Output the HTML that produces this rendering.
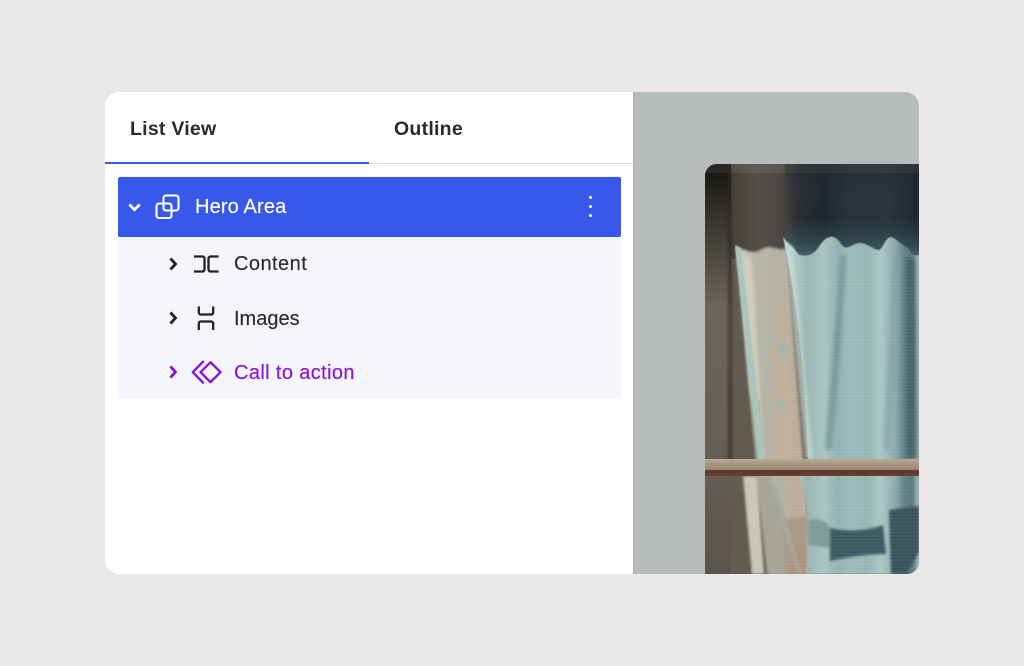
<!DOCTYPE html>
<html><head><meta charset="utf-8"><style>
html,body{margin:0;padding:0;width:1024px;height:666px;overflow:hidden;background:#eae9e7;font-family:"Liberation Sans",sans-serif}
.a{position:absolute}
.t{position:absolute;white-space:nowrap;line-height:24px;font-size:20px;color:#2b2b2b;-webkit-text-stroke:.15px currentColor}
</style></head><body>
<div class="a" style="left:105px;top:92px;width:814px;height:482px;border-radius:14px;background:#fff;overflow:hidden">
<div class="a" style="left:528px;top:0;width:286px;height:482px;background:#b6bcbc"></div>
<div class="a" style="left:528px;top:0;width:1px;height:482px;background:#a9aeae"></div>
<div class="a" style="left:0;top:70.5px;width:528px;height:1.5px;background:#dedede"></div>
<div class="a" style="left:0;top:70px;width:264px;height:2px;background:#3858e9"></div>
<div class="a" style="left:12.5px;top:84px;width:503.5px;height:223px;border-radius:3px;background:#f5f6fc"></div>
<div class="a" style="left:12.5px;top:84.5px;width:503.5px;height:60.5px;border-radius:2px;background:#3858e9"></div>
</div>
<div class="t" style="left:130px;top:117px;font-size:19.5px;font-weight:700;letter-spacing:.25px;-webkit-text-stroke:0">List View</div>
<div class="t" style="left:394px;top:117px;font-size:19.5px;font-weight:700;letter-spacing:.25px;-webkit-text-stroke:0">Outline</div>
<div class="t" style="left:195px;top:195px;color:#fff;letter-spacing:.15px">Hero Area</div>
<div class="t" style="left:234px;top:252px;letter-spacing:.45px">Content</div>
<div class="t" style="left:234px;top:307px;letter-spacing:0">Images</div>
<div class="t" style="left:234px;top:361px;color:#8a0fdc;letter-spacing:.38px">Call to action</div>
<svg class="a" style="left:0;top:0" width="1024" height="666" viewBox="0 0 1024 666" fill="none">
<defs>
<clipPath id="c"><path d="M705 574V176a12 12 0 0 1 12-12H919V562a12 12 0 0 1-12 12Z"/></clipPath>
<filter id="b4" x="-30%" y="-30%" width="160%" height="160%"><feGaussianBlur stdDeviation="4"/></filter>
<filter id="b2" x="-30%" y="-20%" width="160%" height="140%"><feGaussianBlur stdDeviation="2.200"/></filter>
<filter id="b1" x="-20%" y="-20%" width="140%" height="140%"><feGaussianBlur stdDeviation="1.200"/></filter>
<filter id="b05" x="-20%" y="-20%" width="140%" height="140%"><feGaussianBlur stdDeviation=".6"/></filter>
<linearGradient id="l" x1="0" y1="0" x2="0" y2="1"><stop offset="0" stop-color="#15130f"/><stop offset=".12" stop-color="#35302a"/><stop offset=".35" stop-color="#6d6559"/><stop offset=".7" stop-color="#675f54"/><stop offset="1" stop-color="#5a544b"/></linearGradient>
<linearGradient id="top" x1="0" y1="0" x2="1" y2="0"><stop offset="0" stop-color="#2a2722"/><stop offset=".12" stop-color="#474139"/><stop offset=".25" stop-color="#544f49"/><stop offset=".36" stop-color="#4a4641"/><stop offset=".43" stop-color="#2d3035"/><stop offset=".55" stop-color="#1f262c"/><stop offset=".68" stop-color="#2a3339"/><stop offset=".85" stop-color="#2b353c"/><stop offset="1" stop-color="#20262b"/></linearGradient>
<linearGradient id="topv" x1="0" y1="0" x2="0" y2="1"><stop offset="0" stop-color="#1d2226" stop-opacity=".3"/><stop offset=".55" stop-color="#2f4a55" stop-opacity="0"/><stop offset="1" stop-color="#486b78" stop-opacity=".85"/></linearGradient>
<linearGradient id="blue" x1="0" y1="0" x2="1" y2="0"><stop offset="0" stop-color="#bdd5cf"/><stop offset=".1" stop-color="#aac6c1"/><stop offset=".18" stop-color="#99b6b3"/><stop offset=".3" stop-color="#a9c6c2"/><stop offset=".4" stop-color="#94b3b1"/><stop offset=".5" stop-color="#9dbcb9"/><stop offset=".62" stop-color="#97b6b4"/><stop offset=".72" stop-color="#aac7c3"/><stop offset=".82" stop-color="#8fadad"/><stop offset=".9" stop-color="#5f7d84"/><stop offset=".95" stop-color="#5a7880"/><stop offset="1" stop-color="#a5c3be"/></linearGradient>
<linearGradient id="sheer" x1="0" y1="0" x2="1" y2="0"><stop offset="0" stop-color="#cfcfc0"/><stop offset=".3" stop-color="#b6b6a8"/><stop offset=".55" stop-color="#b5b2a3"/><stop offset=".8" stop-color="#bcac97"/><stop offset="1" stop-color="#c6b7a2"/></linearGradient>
<linearGradient id="rail" x1="0" y1="0" x2="0" y2="1"><stop offset="0" stop-color="#b5ad98"/><stop offset=".3" stop-color="#a8967f"/><stop offset=".62" stop-color="#9c8872"/><stop offset=".68" stop-color="#5f3428"/><stop offset="1" stop-color="#6b4033"/></linearGradient>
<pattern id="st" width="4" height="3.500" patternUnits="userSpaceOnUse"><rect width="4" height="1" fill="#fff" opacity=".05"/></pattern>
</defs>
<g clip-path="url(#c)">
<rect x="705" y="164" width="214" height="410" fill="#625b50"/>
<rect x="705" y="164" width="214" height="95" fill="url(#top)"/>
<rect x="705" y="164" width="26" height="410" fill="url(#l)"/>
<rect x="705" y="164" width="214" height="9" fill="#fff" opacity=".08"/>
<rect x="785" y="164" width="134" height="95" fill="url(#topv)"/>
<g filter="url(#b1)">
<path d="M728 170h4l0 290h-4Z" fill="#2f2a24" opacity=".6"/>
<path d="M736 248c6 0 12 4 18 4 6 0 10-6 16-5 6 1 10 3 16 2L812 574H770L758 476 748 380Z" fill="url(#sheer)"/>
<path d="M742 255c1 70 8 140 14 204h8c-4-70-8-140-13-200Z" fill="#d5d3c2" opacity=".7"/>
</g>
<g filter="url(#b2)">
<path d="M778 300c8 20 13 50 14 160h-18c-1-60-1-110 4-160Z" fill="#c6b098" opacity=".75"/>
<path d="M782 335l6 12-5 14-5-12Z" fill="#a3b5ae"/>
<path d="M780 395l6 10-4 12-5-10Z" fill="#a3b5ae"/>
</g>
<g filter="url(#b1)">
<path d="M752 400l6 60 4 0-4-60Z" fill="#38312a" opacity=".6"/>
<path d="M743 476h14l7 98h-12Z" fill="#c9c8b8"/>
<path d="M757 476h12l38 98h-40Z" fill="#a8a497"/>
<path d="M783 520l24-4v58h-22Z" fill="#a99a88"/>
<path d="M790 545l14 0 3 29h-14Z" fill="#b48a6b" opacity=".5"/>
</g>
<path d="M735 245l6 3 24 212h-7Z" fill="#a9c5bd" filter="url(#b05)"/>
<path d="M767 476h6l30 98h-6Z" fill="#9fb0ab" opacity=".5" filter="url(#b05)"/>
<path d="M783 237c5 6 7 8 10 10 3 3 5 8 7 8 4 1 9 1 13-2 6-3 8-14 17-16 7-2 11 8 14 10 5 2 10-4 16-4 7 0 11 5 18 7 5 0 7-12 12-13 5 0 10 7 17 10 3 3 5 8 8 8h4V574H806C811 540 806 490 800 476L808 459C805 380 797 300 783 237Z" fill="url(#blue)" filter="url(#b05)"/>
<g filter="url(#b2)">
<path d="M785 245l6 0 22 214h-7Z" fill="#cee2dc" opacity=".7"/>
<path d="M840 255l6 0c-4 70-8 130-14 195h-7c5-70 12-130 15-195Z" fill="#5f7f82" opacity=".55"/>
<path d="M892 255l6 0c-2 70-3 130-8 195h-7c4-70 8-130 9-195Z" fill="#7b9a9b" opacity=".5"/>
<path d="M906 258l9 0 2 200h-10Z" fill="#3e5a63" opacity=".7"/>
</g>
<g filter="url(#b1)">
<path d="M808 520c8-2 18-1 22 8v20l-22-3Z" fill="#7f9b97"/>
<path d="M830 528c16 4 38 3 53-3l3 29c-18 0-38 3-56 7Z" fill="#3e5a63"/>
<path d="M889 510l30-4v46l-12 22-16 0Z" fill="#3a535d"/>
</g>
<rect x="785" y="250" width="134" height="324" fill="url(#st)"/>
<rect x="705" y="459" width="214" height="17" fill="url(#rail)"/>
</g>
<path d="M129.300 204.500 134.500 209.700 139.700 204.500" stroke="#fff" stroke-width="2.700"/>
<rect x="156.500" y="203.500" width="15" height="14.500" rx="2.500" stroke="#fff" stroke-width="2.100"/>
<rect x="163.500" y="195.500" width="15" height="15" rx="2.500" stroke="#fff" stroke-width="2.100"/>
<circle cx="590.500" cy="197.500" r="1.500" fill="#fff"/><circle cx="590.500" cy="206.500" r="1.500" fill="#fff"/><circle cx="590.500" cy="215.500" r="1.500" fill="#fff"/>
<path d="M170.500 258.500 175.500 264 170.500 269.500" stroke="#222" stroke-width="2.800"/>
<path d="M170.500 312.500 175.500 318 170.500 323.500" stroke="#222" stroke-width="2.800"/>
<path d="M170.500 366.500 175.500 372 170.500 377.500" stroke="#8a0fdc" stroke-width="2.800"/>
<path d="M194 256.500h8.500a2 2 0 0 1 2 2v11a2 2 0 0 1-2 2H194M218.500 256.500h-8a2 2 0 0 0-2 2v11a2 2 0 0 0 2 2h8" stroke="#222" stroke-width="2.300"/>
<path d="M198.800 306.500v6a2 2 0 0 0 2 2h10.400a2 2 0 0 0 2-2v-6M198.800 330v-6.500a2 2 0 0 1 2-2h10.400a2 2 0 0 1 2 2v6.500" stroke="#222" stroke-width="2.300"/>
<path d="M210.500 362.200 220.500 372.200 210.500 382.200 200.500 372.200Z" stroke="#8a0fdc" stroke-width="2.300" stroke-linejoin="round"/>
<path d="M203 361.700 192.800 372.200 203 382.700" stroke="#8a0fdc" stroke-width="2.300" stroke-linecap="round" stroke-linejoin="round"/>
</svg>
</body></html>
